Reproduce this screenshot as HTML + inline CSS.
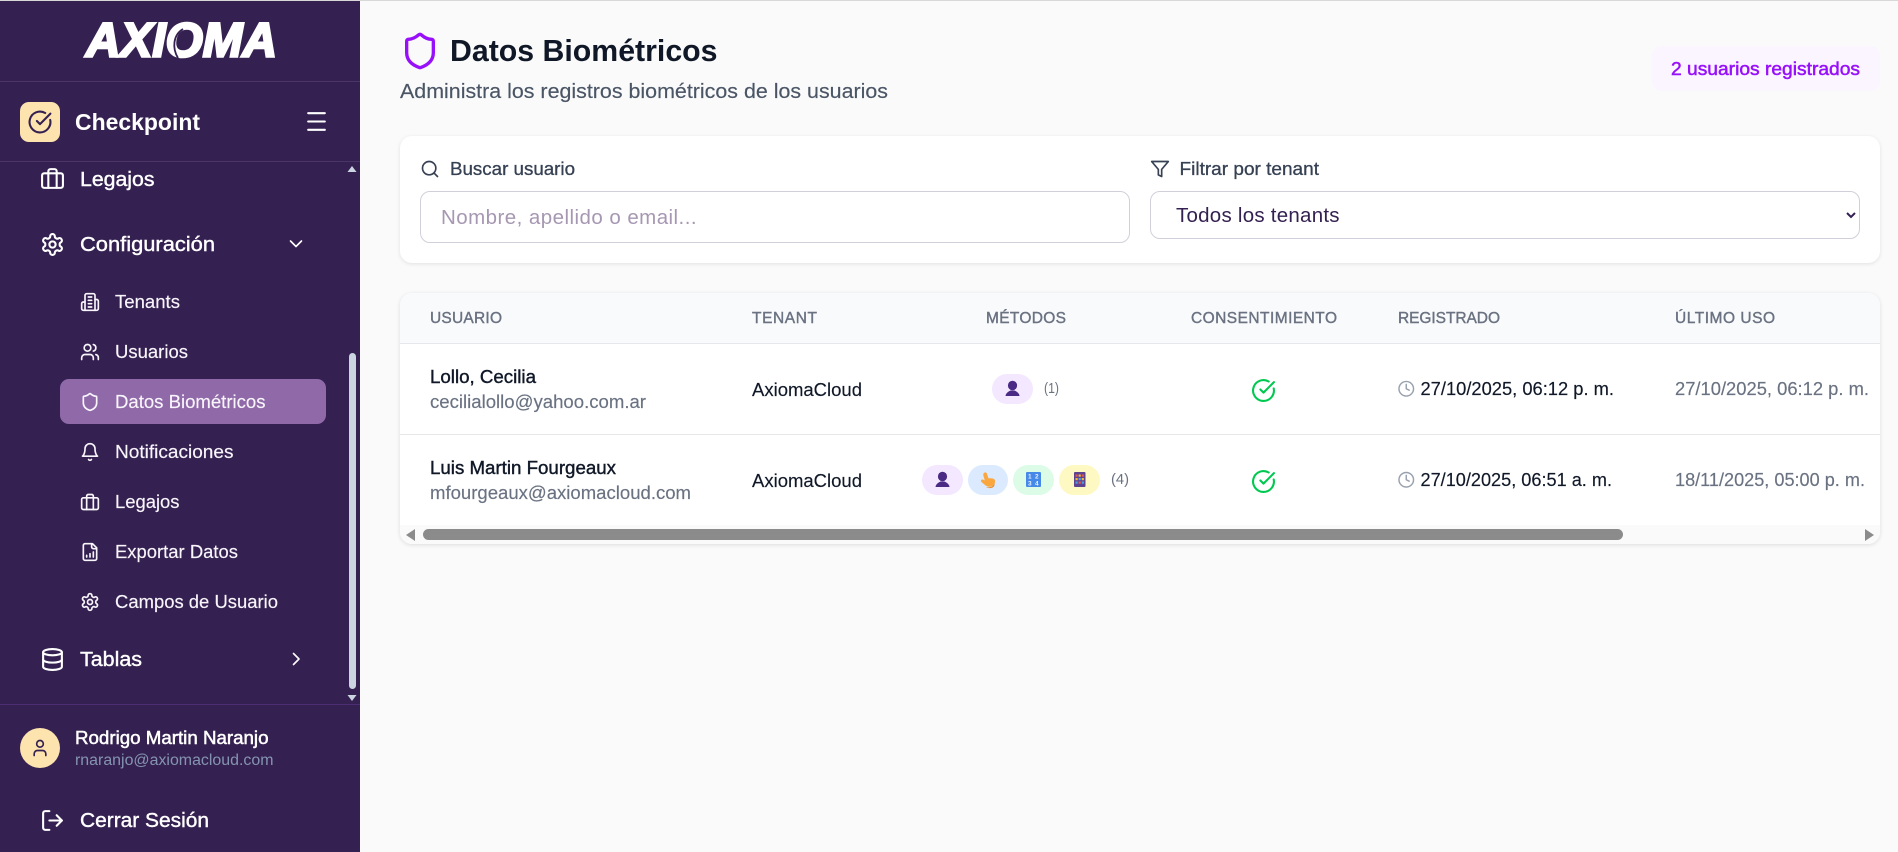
<!DOCTYPE html>
<html lang="es"><head><meta charset="utf-8"><title>Datos Biométricos</title>
<style>
html,body{margin:0;padding:0;width:1898px;height:852px;overflow:hidden;background:#fafafa;font-family:"Liberation Sans",sans-serif}
.a{position:absolute}
svg{position:absolute;left:0;top:0;overflow:visible}
svg text{font-family:"Liberation Sans",sans-serif;fill:currentColor}
.r{stroke:currentColor;stroke-width:.15px}
.m{stroke:currentColor;stroke-width:.4px}
.s{stroke:currentColor;stroke-width:.5px}
.i{fill:none;stroke:currentColor;stroke-linecap:round;stroke-linejoin:round}
input,select{box-sizing:border-box;margin:0;font-family:"Liberation Sans",sans-serif;font-size:20.5px;background:#fff;border:1.25px solid #d1d0da;outline:none}
input::placeholder{color:#a697b2;opacity:1}
</style></head><body>
<div class="a" style="left:0;top:0;width:1898px;height:1px;background:#d8d8d8;z-index:5"></div>
<!-- sidebar -->
<div class="a" style="left:0;top:0;width:360px;height:852px;background:#352151"></div>
<div class="a" style="left:0;top:81px;width:360px;height:1px;background:#4a3566"></div>
<div class="a" style="left:0;top:161px;width:360px;height:1px;background:#4a3566"></div>
<div class="a" style="left:0;top:704px;width:360px;height:1px;background:#4b2f72"></div>
<div class="a" style="left:20px;top:102px;width:40px;height:40px;border-radius:9px;background:#fde3ae"></div>
<div class="a" style="left:60px;top:379px;width:266px;height:45px;border-radius:9px;background:#8f69a8"></div>
<div class="a" style="left:349px;top:353px;width:7px;height:336px;border-radius:4px;background:#cbd5e1"></div>
<div class="a" style="left:20px;top:728px;width:40px;height:40px;border-radius:50%;background:#fde3ae"></div>
<!-- main cards -->
<div class="a" style="left:1652px;top:46px;width:228px;height:45px;border-radius:10px;background:#faf5ff"></div>
<div class="a" style="left:400px;top:136px;width:1480px;height:127px;border-radius:12px;background:#fff;box-shadow:0 1px 4px rgba(0,0,0,.1)"></div>
<input class="a" style="left:420px;top:191px;width:710px;height:52px;border-radius:10px;padding:2px 0 0 20px;letter-spacing:.45px" placeholder="Nombre, apellido o email...">
<select class="a" style="left:1150px;top:191px;width:710px;height:48px;border-radius:10px;padding:1px 0 0 21px;color:#352151;letter-spacing:.25px"><option>Todos los tenants</option></select>
<div class="a" style="left:400px;top:293px;width:1480px;height:251px;border-radius:12px;background:#fff;box-shadow:0 1px 4px rgba(0,0,0,.12);overflow:hidden">
  <div class="a" style="left:0;top:0;width:1480px;height:50px;background:#f9fafb;border-bottom:1px solid #e5e7eb"></div>
  <div class="a" style="left:0;top:141px;width:1480px;height:1px;background:#e5e7eb"></div>
  <div class="a" style="left:0;top:232px;width:1480px;height:19px;background:#fafafa"></div>
  <div class="a" style="left:23px;top:236px;width:1200px;height:11px;border-radius:6px;background:#8b8b8b"></div>
</div>
<!-- pills -->
<div class="a" style="left:992px;top:374px;width:41px;height:30px;border-radius:15px;background:#f3e8ff"></div>
<div class="a" style="left:922px;top:465px;width:41px;height:30px;border-radius:15px;background:#f3e8ff"></div>
<div class="a" style="left:968px;top:465px;width:40px;height:30px;border-radius:15px;background:#dbeafe"></div>
<div class="a" style="left:1013px;top:465px;width:41px;height:30px;border-radius:15px;background:#dcfce7"></div>
<div class="a" style="left:1059px;top:465px;width:41px;height:30px;border-radius:15px;background:#fef9c2"></div>

<svg width="1898" height="852" viewBox="0 0 1898 852">
<!-- logo -->
<g color="#fff">
<text x="86" y="56.500" font-size="48.500" font-weight="700" font-style="italic" textLength="191" lengthAdjust="spacingAndGlyphs" style="stroke:#fff;stroke-width:2.600px;stroke-linejoin:miter">AXIOMA</text>
<path d="M183 29C173 35 172 48 178 58" fill="none" stroke="#352151" stroke-width="1.800"/>
</g>
<!-- scroll arrows -->
<path d="M352 166l4.500 6h-9z" fill="#cbd5e1"/><path d="M352 701l4.500-6h-9z" fill="#cbd5e1"/>
<path d="M406 535l9-6v12z" fill="#8b8b8b"/><path d="M1874 535l-9-6v12z" fill="#8b8b8b"/>
<!-- sidebar text -->
<g color="#fff">
<text x="75" y="130" font-size="23" font-weight="700" textLength="125" lengthAdjust="spacingAndGlyphs">Checkpoint</text>
<g font-size="20.500">
<text x="80" y="186" textLength="74.500" lengthAdjust="spacingAndGlyphs" class="m">Legajos</text>
<text x="80" y="251" textLength="135" lengthAdjust="spacingAndGlyphs" class="m">Configuración</text>
<text x="80" y="666" textLength="62" lengthAdjust="spacingAndGlyphs" class="m">Tablas</text>
<text x="80" y="827" textLength="129" lengthAdjust="spacingAndGlyphs" class="m">Cerrar Sesión</text>
</g>
<g font-size="18" color="#f8f5fb">
<text x="115" y="308" textLength="65" lengthAdjust="spacingAndGlyphs" class="r">Tenants</text>
<text x="115" y="358" textLength="73" lengthAdjust="spacingAndGlyphs" class="r">Usuarios</text>
<text x="115" y="408" textLength="150.500" lengthAdjust="spacingAndGlyphs" class="r">Datos Biométricos</text>
<text x="115" y="458" textLength="118.500" lengthAdjust="spacingAndGlyphs" class="r">Notificaciones</text>
<text x="115" y="508" textLength="64.500" lengthAdjust="spacingAndGlyphs" class="r">Legajos</text>
<text x="115" y="558" textLength="123" lengthAdjust="spacingAndGlyphs" class="r">Exportar Datos</text>
<text x="115" y="608" textLength="163" lengthAdjust="spacingAndGlyphs" class="r">Campos de Usuario</text>
</g>
<text x="75" y="744" font-size="18" textLength="193.500" lengthAdjust="spacingAndGlyphs" class="s">Rodrigo Martin Naranjo</text>
</g>
<text x="75" y="765" font-size="15.500" textLength="198.500" lengthAdjust="spacingAndGlyphs" style="color:#8494b0">rnaranjo@axiomacloud.com</text>
<!-- sidebar icons -->
<g color="#fff" stroke-width="2" >
<svg x="40" y="166" width="25" height="25" viewBox="0 0 24 24" class="i"><rect width="20" height="14" x="2" y="7" rx="2"/><path d="M16 21V5a2 2 0 0 0-2-2h-4a2 2 0 0 0-2 2v16"/></svg>
<svg x="40" y="232" width="25" height="25" viewBox="0 0 24 24" class="i"><path d="M12.22 2h-.44a2 2 0 0 0-2 2v.18a2 2 0 0 1-1 1.73l-.43.25a2 2 0 0 1-2 0l-.15-.08a2 2 0 0 0-2.73.73l-.22.38a2 2 0 0 0 .73 2.73l.15.1a2 2 0 0 1 1 1.72v.51a2 2 0 0 1-1 1.74l-.15.09a2 2 0 0 0-.73 2.73l.22.38a2 2 0 0 0 2.73.73l.15-.08a2 2 0 0 1 2 0l.43.25a2 2 0 0 1 1 1.73V20a2 2 0 0 0 2 2h.44a2 2 0 0 0 2-2v-.18a2 2 0 0 1 1-1.73l.43-.25a2 2 0 0 1 2 0l.15.08a2 2 0 0 0 2.73-.73l.22-.39a2 2 0 0 0-.73-2.73l-.15-.08a2 2 0 0 1-1-1.74v-.5a2 2 0 0 1 1-1.74l.15-.09a2 2 0 0 0 .73-2.73l-.22-.38a2 2 0 0 0-2.73-.73l-.15.08a2 2 0 0 1-2 0l-.43-.25a2 2 0 0 1-1-1.73V4a2 2 0 0 0-2-2z"/><circle cx="12" cy="12" r="3"/></svg>
<svg x="40" y="647" width="25" height="25" viewBox="0 0 24 24" class="i"><ellipse cx="12" cy="5" rx="9" ry="3"/><path d="M3 5V19A9 3 0 0 0 21 19V5"/><path d="M3 12A9 3 0 0 0 21 12"/></svg>
<svg x="40" y="808" width="25" height="25" viewBox="0 0 24 24" class="i"><path d="M9 21H5a2 2 0 0 1-2-2V5a2 2 0 0 1 2-2h4"/><path d="M16 17l5-5-5-5"/><path d="M21 12H9"/></svg>
<svg x="304" y="109" width="25" height="25" viewBox="0 0 24 24" class="i"><path d="M4 4h16M4 12h16M4 20h16"/></svg>
<svg x="286" y="236" width="20" height="16" viewBox="0 0 20 16" class="i" stroke-width="1.600"><path d="M4.500 5l5.500 5.500L15.500 5"/></svg>
<svg x="288" y="649" width="16" height="20" viewBox="0 0 16 20" class="i" stroke-width="1.600"><path d="M5.500 4.500L11 10l-5.500 5.500"/></svg>
</g>
<g color="#f8f5fb" stroke-width="2">
<svg x="80" y="292" width="20" height="20" viewBox="0 0 24 24" class="i"><path d="M6 22V4a2 2 0 0 1 2-2h8a2 2 0 0 1 2 2v18Z"/><path d="M6 12H4a2 2 0 0 0-2 2v6a2 2 0 0 0 2 2h2"/><path d="M18 9h2a2 2 0 0 1 2 2v9a2 2 0 0 1-2 2h-2"/><path d="M10 6h4M10 10h4M10 14h4M10 18h4"/></svg>
<svg x="80" y="342" width="20" height="20" viewBox="0 0 24 24" class="i"><path d="M16 21v-2a4 4 0 0 0-4-4H6a4 4 0 0 0-4 4v2"/><circle cx="9" cy="7" r="4"/><path d="M22 21v-2a4 4 0 0 0-3-3.870"/><path d="M16 3.130a4 4 0 0 1 0 7.750"/></svg>
<svg x="80" y="392" width="20" height="20" viewBox="0 0 24 24" class="i"><path d="M20 13c0 5-3.500 7.500-7.660 8.950a1 1 0 0 1-.67-.01C7.500 20.500 4 18 4 13V6a1 1 0 0 1 1-1c2 0 4.500-1.200 6.240-2.720a1.170 1.170 0 0 1 1.520 0C14.510 3.810 17 5 19 5a1 1 0 0 1 1 1z"/></svg>
<svg x="80" y="442" width="20" height="20" viewBox="0 0 24 24" class="i"><path d="M6 8a6 6 0 0 1 12 0c0 7 3 9 3 9H3s3-2 3-9"/><path d="M10.300 21a1.940 1.940 0 0 0 3.400 0"/></svg>
<svg x="80" y="492" width="20" height="20" viewBox="0 0 24 24" class="i"><rect width="20" height="14" x="2" y="7" rx="2"/><path d="M16 21V5a2 2 0 0 0-2-2h-4a2 2 0 0 0-2 2v16"/></svg>
<svg x="80" y="542" width="20" height="20" viewBox="0 0 24 24" class="i"><path d="M15 2H6a2 2 0 0 0-2 2v16a2 2 0 0 0 2 2h12a2 2 0 0 0 2-2V7Z"/><path d="M14 2v4a2 2 0 0 0 2 2h4"/><path d="M8 18v-2M12 18v-4M16 18v-6"/></svg>
<svg x="80" y="592" width="20" height="20" viewBox="0 0 24 24" class="i"><path d="M12.22 2h-.44a2 2 0 0 0-2 2v.18a2 2 0 0 1-1 1.73l-.43.25a2 2 0 0 1-2 0l-.15-.08a2 2 0 0 0-2.73.73l-.22.38a2 2 0 0 0 .73 2.73l.15.1a2 2 0 0 1 1 1.72v.51a2 2 0 0 1-1 1.74l-.15.09a2 2 0 0 0-.73 2.73l.22.38a2 2 0 0 0 2.73.73l.15-.08a2 2 0 0 1 2 0l.43.25a2 2 0 0 1 1 1.73V20a2 2 0 0 0 2 2h.44a2 2 0 0 0 2-2v-.18a2 2 0 0 1 1-1.73l.43-.25a2 2 0 0 1 2 0l.15.08a2 2 0 0 0 2.73-.73l.22-.39a2 2 0 0 0-.73-2.73l-.15-.08a2 2 0 0 1-1-1.74v-.5a2 2 0 0 1 1-1.74l.15-.09a2 2 0 0 0 .73-2.73l-.22-.38a2 2 0 0 0-2.73-.73l-.15.08a2 2 0 0 1-2 0l-.43-.25a2 2 0 0 1-1-1.73V4a2 2 0 0 0-2-2z"/><circle cx="12" cy="12" r="3"/></svg>
</g>
<g color="#352151" stroke-width="2">
<svg x="27.500" y="109.500" width="25" height="25" viewBox="0 0 24 24" class="i"><path d="M21.801 10A10 10 0 1 1 17 3.335"/><path d="m9 11 3 3L22 4"/></svg>
<svg x="30" y="738" width="20" height="20" viewBox="0 0 24 24" class="i"><path d="M19 21v-2a4 4 0 0 0-4-4H9a4 4 0 0 0-4 4v2"/><circle cx="12" cy="7" r="4"/></svg>
</g>
<!-- page header -->
<svg x="400" y="31" width="40" height="40" viewBox="0 0 24 24" class="i" color="#9810fa" stroke-width="2"><path d="M20 13c0 5-3.500 7.500-7.660 8.950a1 1 0 0 1-.67-.01C7.500 20.500 4 18 4 13V6a1 1 0 0 1 1-1c2 0 4.500-1.200 6.240-2.720a1.170 1.170 0 0 1 1.520 0C14.510 3.810 17 5 19 5a1 1 0 0 1 1 1z"/></svg>
<text x="450" y="61" font-size="30.500" font-weight="700" textLength="267.500" lengthAdjust="spacingAndGlyphs" style="color:#101828">Datos Biométricos</text>
<text x="400" y="98" font-size="20.500" textLength="488" lengthAdjust="spacingAndGlyphs" class="r" style="color:#4a5565">Administra los registros biométricos de los usuarios</text>
<text x="1671" y="75" font-size="18" textLength="189" lengthAdjust="spacingAndGlyphs" class="s" style="color:#9810fa">2 usuarios registrados</text>
<!-- filters -->
<g style="color:#364153">
<svg x="420" y="159" width="20" height="20" viewBox="0 0 24 24" class="i" stroke-width="2"><circle cx="11" cy="11" r="8"/><path d="m21 21-4.300-4.300"/></svg>
<text x="450" y="175" font-size="18" textLength="125" lengthAdjust="spacingAndGlyphs" class="m" style="stroke-width:.3px">Buscar usuario</text>
<svg x="1150" y="159" width="20" height="20" viewBox="0 0 24 24" class="i" stroke-width="2"><path d="M22 3H2l8 9.460V19l4 2v-8.540L22 3z"/></svg>
<text x="1179.500" y="175" font-size="18" textLength="139.500" lengthAdjust="spacingAndGlyphs" class="m" style="stroke-width:.3px">Filtrar por tenant</text>
</g>
<!-- table headers -->
<g font-size="15.500" style="color:#6a7282">
<text x="430" y="323" textLength="72" class="m">USUARIO</text>
<text x="752" y="323" textLength="65" class="m">TENANT</text>
<text x="986" y="323" textLength="80" class="m">MÉTODOS</text>
<text x="1191" y="323" textLength="146" class="m">CONSENTIMIENTO</text>
<text x="1398" y="323" textLength="102" class="m">REGISTRADO</text>
<text x="1675" y="323" textLength="100" class="m">ÚLTIMO USO</text>
</g>
<!-- rows -->
<g font-size="18" style="color:#101828">
<text x="430" y="383" textLength="106" lengthAdjust="spacingAndGlyphs" class="m">Lollo, Cecilia</text>
<text x="430" y="474" textLength="186" lengthAdjust="spacingAndGlyphs" class="m">Luis Martin Fourgeaux</text>
<text x="752" y="396" textLength="110" lengthAdjust="spacingAndGlyphs" class="r">AxiomaCloud</text>
<text x="752" y="487" textLength="110" lengthAdjust="spacingAndGlyphs" class="r">AxiomaCloud</text>
<text x="1420.500" y="395" textLength="193.500" lengthAdjust="spacingAndGlyphs" class="r">27/10/2025, 06:12 p. m.</text>
<text x="1420.500" y="486" textLength="191.500" lengthAdjust="spacingAndGlyphs" class="r">27/10/2025, 06:51 a. m.</text>
</g>
<g font-size="18" style="color:#6a7282">
<text x="430" y="408" textLength="216" lengthAdjust="spacingAndGlyphs" class="r">cecilialollo@yahoo.com.ar</text>
<text x="430" y="499" textLength="261" lengthAdjust="spacingAndGlyphs" class="r">mfourgeaux@axiomacloud.com</text>
<text x="1675" y="395" textLength="194" lengthAdjust="spacingAndGlyphs" class="r">27/10/2025, 06:12 p. m.</text>
<text x="1675" y="486" textLength="190" lengthAdjust="spacingAndGlyphs" class="r">18/11/2025, 05:00 p. m.</text>
<text x="1044" y="393" font-size="15" textLength="15" lengthAdjust="spacingAndGlyphs">(1)</text>
<text x="1111" y="484" font-size="15" textLength="18" lengthAdjust="spacingAndGlyphs">(4)</text>
</g>
<!-- clock + check icons -->
<g style="color:#99a1af" stroke-width="2">
<svg x="1397.500" y="380" width="17.500" height="17.500" viewBox="0 0 24 24" class="i"><circle cx="12" cy="12" r="10"/><path d="M12 6v6l4 2"/></svg>
<svg x="1397.500" y="471" width="17.500" height="17.500" viewBox="0 0 24 24" class="i"><circle cx="12" cy="12" r="10"/><path d="M12 6v6l4 2"/></svg>
</g>
<g style="color:#00c950" stroke-width="2">
<svg x="1251" y="378" width="25" height="25" viewBox="0 0 24 24" class="i"><path d="M21.801 10A10 10 0 1 1 17 3.335"/><path d="m9 11 3 3L22 4"/></svg>
<svg x="1251" y="469" width="25" height="25" viewBox="0 0 24 24" class="i"><path d="M21.801 10A10 10 0 1 1 17 3.335"/><path d="m9 11 3 3L22 4"/></svg>
</g>
<!-- emoji icons -->
<g fill="#4b2a85">
<ellipse cx="1012.500" cy="385.500" rx="4.600" ry="4.800"/><path d="M1005.500 396c.3-3 3-4.500 5-5.500h4c2 1 4.700 2.500 5 5.500z"/>
<ellipse cx="942.500" cy="476.500" rx="4.600" ry="4.800"/><path d="M935.500 487c.3-3 3-4.500 5-5.500h4c2 1 4.700 2.500 5 5.500z"/>
</g>
<path d="M984 473c.8-1 2.300-.8 2.800.4l1.700 5c2.200-.4 4.800-.2 6 1 .9 1.500.7 4-.5 5.500-1.500 1.800-4.800 2.400-7 1.400-2-1-3.500-2.600-5.500-4.300-.8-.8-.8-2 .3-2.400 1-.3 2.100.3 3 1l-1.500-5.300c-.2-.7.100-1.800.7-2.300z" fill="#f9a73e"/>
<path d="M986 487c3 .8 7 .3 8.500-3.500.3 2.500-1 4-3.500 4.500-2 .3-3.500 0-5-1z" fill="#e88a24"/>
<rect x="1026" y="472" width="15" height="15" rx="1" fill="#4689e8"/>
<g font-size="6.500" font-weight="700" style="color:#eaf3ff">
<text x="1028" y="478.500">1</text><text x="1035" y="478.500">2</text><text x="1028" y="485.500">3</text><text x="1035" y="485.500">4</text>
</g>
<rect x="1074" y="472" width="11.500" height="15" rx="1" fill="#5d4390"/>
<g>
<rect x="1075.500" y="474.500" width="2.200" height="2.200" fill="#e8574e"/><rect x="1078.600" y="474.500" width="2.200" height="2.200" fill="#f6b73c"/><rect x="1081.700" y="474.500" width="2.200" height="2.200" fill="#e8574e"/>
<rect x="1075.500" y="478" width="2.200" height="2.200" fill="#f6b73c"/><rect x="1078.600" y="478" width="2.200" height="2.200" fill="#45a5e8"/><rect x="1081.700" y="478" width="2.200" height="2.200" fill="#f6b73c"/>
<rect x="1075.500" y="481.500" width="2.200" height="2.200" fill="#45a5e8"/><rect x="1078.600" y="481.500" width="2.200" height="2.200" fill="#e8574e"/><rect x="1081.700" y="481.500" width="2.200" height="2.200" fill="#45a5e8"/>
</g>
</svg>
</body></html>
